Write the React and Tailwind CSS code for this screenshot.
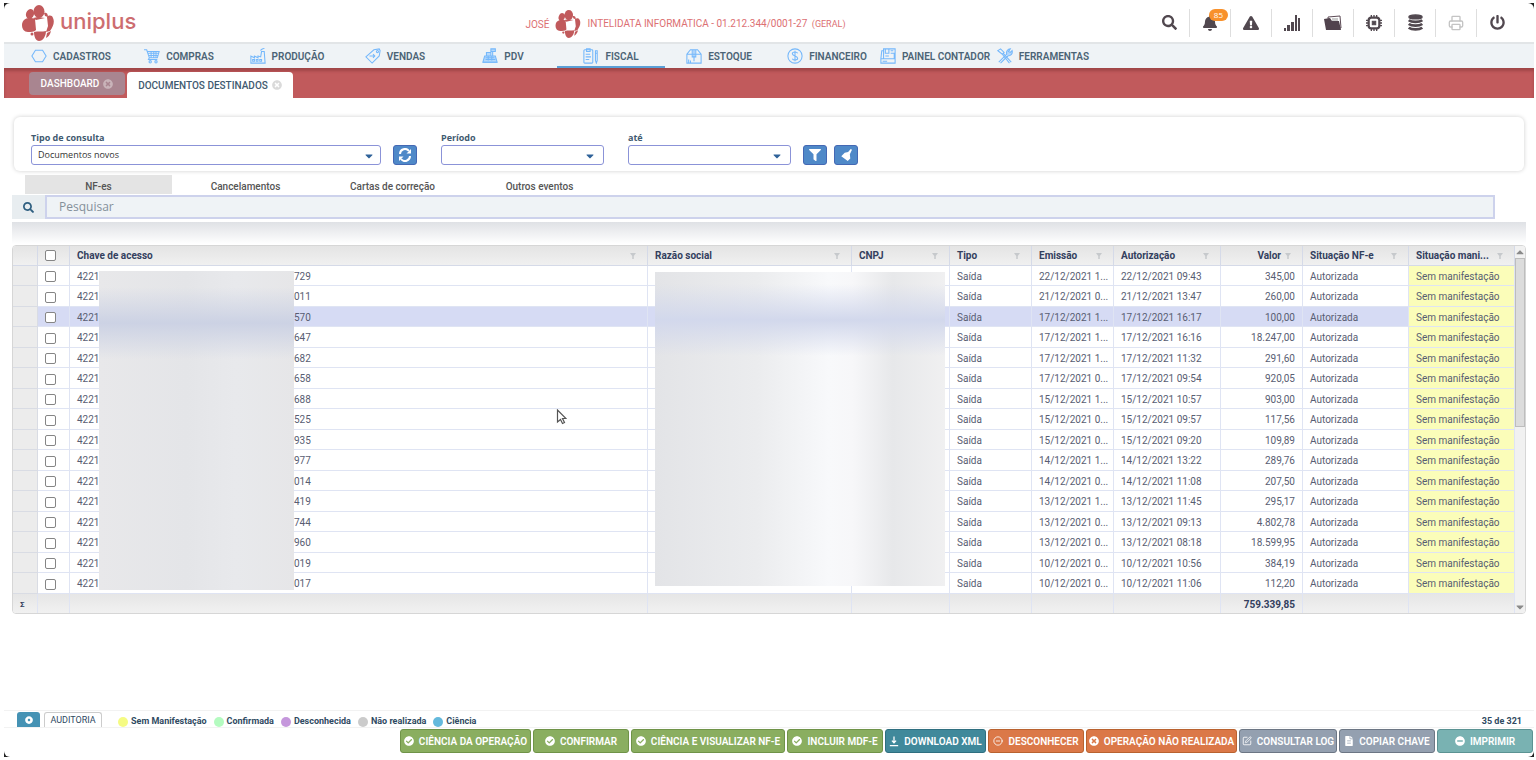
import React, { useState } from 'react';
import {
  FaSearch, FaBell, FaExclamationTriangle, FaFilter, FaPowerOff, FaCaretDown, FaCaretUp,
  FaCheckCircle, FaTimesCircle, FaMinusCircle, FaFileAlt, FaDotCircle,
} from 'react-icons/fa';
import { CircleMinus, SquarePen, Printer } from 'lucide-react';

const narrow = "font-['Liberation_Sans_Narrow','Roboto',sans-serif]";

const Emblem = ({ className }) => (
  <svg viewBox="0 0 32 36" className={className} fill="#c15a5c" aria-hidden="true">
    <ellipse cx="17" cy="6.500" rx="5.500" ry="6.500" />
    <ellipse cx="8" cy="9" rx="4" ry="5" transform="rotate(20 8 9)" />
    <path d="M0 20c0-4 3-7 7-7 3 0 5 0 6 1l1 11c-2 2-5 2-8 2-4 0-6-3-6-7z" />
    <path d="M11 13l5-1 7 1-9 2z" />
    <path d="M25 12c2-2 5-2 6 1 2 4 0 9-3 13l-4 1 2-6z" />
    <path d="M12 27c4-1 8 0 12-1 0 5-3 10-7 10-3 0-5-4-5-9z" />
    <path d="M25 28l4-2c-1 4-3 6-5 7z" />
    <path d="M22 8c2-1 4 0 4 4l-3-1z" />
    <circle cx="10" cy="29" r="1.500" />
  </svg>
);

const SignalIcon = () => (
  <svg viewBox="0 0 18 18" className="w-[18px] h-[18px]" fill="currentColor">
    <path d="M1 14h2v3H1zM4 11h3v6H4zM8 8h3v9H8zM12 1h2v16h-2zM15 4h2v13h-2z" />
  </svg>
);

const FolderIcon = () => (
  <svg viewBox="0 0 18 16" className="w-[18px] h-4">
    <path d="M4 2l12-1 1 12H5z" fill="#fff" stroke="#5c4a55" />
    <path d="M8 4h6M8 6h6" stroke="#999" />
    <path d="M0 4l6-1 2 3h7l2 9H2z" fill="#51434d" />
  </svg>
);

const ChipIcon = () => (
  <svg viewBox="0 0 18 18" className="w-4 h-4" fill="none" stroke="currentColor" strokeWidth="2.500">
    <rect x="3" y="3" width="12" height="12" rx="3" />
    <rect x="7" y="7" width="4" height="4" fill="currentColor" strokeWidth="1" />
    <path d="M6 0v3M9 0v3M12 0v3M6 15v3M9 15v3M12 15v3M0 6h3M0 9h3M0 12h3M15 6h3M15 9h3M15 12h3" strokeWidth="1.500" />
  </svg>
);

const DiscsIcon = () => (
  <svg viewBox="0 0 16 18" className="w-[15px] h-[17px]" fill="none" stroke="currentColor" strokeWidth="2.800">
    <ellipse cx="8" cy="3" rx="7" ry="2" fill="currentColor" strokeWidth="1.500" />
    <path d="M.8 6.500c3 2.500 11.400 2.500 14.400 0M.8 10.500c3 2.500 11.400 2.500 14.400 0M.8 14.500c3 2.500 11.400 2.500 14.400 0" />
  </svg>
);

const BroomIcon = () => (
  <svg viewBox="0 0 14 14" className="w-3 h-3" fill="#fff">
    <path d="M12.500 0L14 1l-2.500 5 .5 5-3 3-7.500-5.500 4-4 4-1z" />
  </svg>
);

const RefreshIcon = () => (
  <svg viewBox="0 0 14 14" className="w-[14px] h-[14px]" fill="none" stroke="#fff" strokeWidth="2">
    <path d="M2 6a5 5 0 0 1 9-3M12 8a5 5 0 0 1-9 3" />
    <path d="M13 1v4.500H8.500zM1 13V8.500h4.500z" fill="#fff" stroke="none" />
  </svg>
);

const DownloadIcon = () => (
  <svg viewBox="0 0 12 12" className="w-[10px] h-[11px] shrink-0" fill="none" stroke="#fff" strokeWidth="1.500">
    <path d="M6 0v7M3.500 5L6 7.500 8.500 5M1 11h10" />
  </svg>
);

const NavIcon = ({ children }) => (
  <svg viewBox="0 0 18 18" className="w-4 h-4 shrink-0" fill="none" stroke="#75b8fb" strokeWidth="1.200">
    {children}
  </svg>
);

const menu = [
  { label: 'CADASTROS', icon: <path d="M5 2.500h8L17 9l-4 6.500H5L1 9z" /> },
  { label: 'COMPRAS', icon: <><path d="M0 2h3l3 9h9l2-7H4M6 11l-1 2h10M5 6h11M5.500 8.500h10M8 4v7M11 4v7M13.500 4v7" /><circle cx="7" cy="15.500" r="1.300" /><circle cx="13.500" cy="15.500" r="1.300" /></> },
  { label: 'PRODUÇÃO', icon: <path d="M1 17V9l4 2V9l4 2V9l3 1 1-6h3l1 13zM12 3c0-2 4-2 4-3M3 13h2v2H3zM7 13h2v2H7zM11 13h2v2h-2z" /> },
  { label: 'VENDAS', icon: <><path d="M1 10l9-8 6-1 1 2-1 6-8 8z" /><circle cx="14" cy="4" r="1.200" /><path d="M5 9h6M9 7l2 2-2 2" /></> },
  { label: 'PDV', icon: <><path d="M3 9h12l2 7H1zM5 9V5h5v4M12 9V4M10 1h5v3h-5z" fill="#b5d8fb" /><path d="M4 11h10M4 13h11M7 9v5M11 9v5M1 16h16" /></> },
  { label: 'FISCAL', icon: <><rect x="1" y="2" width="10" height="15" rx="1" /><path d="M4 1h4v3H4zM3 7h5M3 10h6M3 13h4M14 3h2v11l-1 3-1-3zM14 6h2" /></> },
  { label: 'ESTOQUE', icon: <path d="M1 17V7l4-5h8l4 5v10zM1 7h16M9 2v13M7 2v8h4V2M3 17v-4M5 17v-3" /> },
  { label: 'FINANCEIRO', icon: <><circle cx="9" cy="9" r="8" /><path d="M12 6c-1-2-6-2-6 .5S12 9 12 11.500 7 14 6 12M9 3v12" /></> },
  { label: 'PAINEL CONTADOR', icon: <><path d="M4 12V1h13v11M1 12h16v5H1zM6 1v5h4V1M12 6h4v6M3 15h5M1 12l1-9h2" /><path d="M12 3h3M6 9h4" /></> },
  { label: 'FERRAMENTAS', icon: <><path d="M2 16L11 7M4 17l8-8M11 7c-1-3 1-6 4-6l-2 3 2 1 2-2c1 4-2 6-5 6" fill="#b5d8fb" /><path d="M1 3l3-2 4 4-2 2zM7 6l9 10M6 7l8 10" /></> },
];

const documents = [
  ['729', '22/12/2021 1...', '22/12/2021 09:43', '345,00'],
  ['011', '21/12/2021 0...', '21/12/2021 13:47', '260,00'],
  ['570', '17/12/2021 1...', '17/12/2021 16:17', '100,00'],
  ['647', '17/12/2021 1...', '17/12/2021 16:16', '18.247,00'],
  ['682', '17/12/2021 1...', '17/12/2021 11:32', '291,60'],
  ['658', '17/12/2021 0...', '17/12/2021 09:54', '920,05'],
  ['688', '15/12/2021 1...', '15/12/2021 10:57', '903,00'],
  ['525', '15/12/2021 0...', '15/12/2021 09:57', '117,56'],
  ['935', '15/12/2021 0...', '15/12/2021 09:20', '109,89'],
  ['977', '14/12/2021 1...', '14/12/2021 13:22', '289,76'],
  ['014', '14/12/2021 0...', '14/12/2021 11:08', '207,50'],
  ['419', '13/12/2021 1...', '13/12/2021 11:45', '295,17'],
  ['744', '13/12/2021 0...', '13/12/2021 09:13', '4.802,78'],
  ['960', '13/12/2021 0...', '13/12/2021 08:18', '18.599,95'],
  ['019', '10/12/2021 0...', '10/12/2021 10:56', '384,19'],
  ['017', '10/12/2021 0...', '10/12/2021 11:06', '112,20'],
];

const columns = ['Chave de acesso', 'Razão social', 'CNPJ', 'Tipo', 'Emissão', 'Autorização', 'Valor', 'Situação NF-e', 'Situação mani...'];

const legend = [
  ['Sem Manifestação', 'bg-[#f5fb83]'],
  ['Confirmada', 'bg-[#b4fbc0]'],
  ['Desconhecida', 'bg-[#c597dc]'],
  ['Não realizada', 'bg-[#cbcbcb]'],
  ['Ciência', 'bg-[#64b9dc]'],
];

const green = 'bg-[#8aae60] border-[#6f9348]';
const orange = 'bg-[#db7848] border-[#b9622f]';
const gray = 'bg-[#94a0b0] border-[#6c7684]';
const iconSize = 'w-[10px] h-[10px] shrink-0';

const actions = [
  { label: 'CIÊNCIA DA OPERAÇÃO', icon: <FaCheckCircle className={iconSize} />, style: green, width: 'w-[131px]' },
  { label: 'CONFIRMAR', icon: <FaCheckCircle className={iconSize} />, style: green, width: 'w-24' },
  { label: 'CIÊNCIA E VISUALIZAR NF-E', icon: <FaCheckCircle className={iconSize} />, style: green, width: 'w-[154px]' },
  { label: 'INCLUIR MDF-E', icon: <FaCheckCircle className={iconSize} />, style: green, width: 'w-24' },
  { label: 'DOWNLOAD XML', icon: <DownloadIcon />, style: 'bg-[#40899b] border-[#2f6f80]', width: 'w-[101px]' },
  { label: 'DESCONHECER', icon: <CircleMinus className={iconSize} />, style: orange, width: 'w-24' },
  { label: 'OPERAÇÃO NÃO REALIZADA', icon: <FaTimesCircle className={iconSize} />, style: orange, width: 'w-[151px]' },
  { label: 'CONSULTAR LOG', icon: <SquarePen className={iconSize} />, style: gray, width: 'w-[98px]' },
  { label: 'COPIAR CHAVE', icon: <FaFileAlt className={iconSize} />, style: gray, width: 'w-24' },
  { label: 'IMPRIMIR', icon: <FaMinusCircle className={iconSize} />, style: 'bg-[#79b2b2] border-[#5b9393]', width: 'w-24' },
];

const Header = () => {
  const tools = [
    ['Pesquisar', <FaSearch className="w-[15px] h-[15px]" />],
    ['Notificações', <FaBell className="w-4 h-4" />, '85'],
    ['Alertas', <FaExclamationTriangle className="w-4 h-4" />],
    ['Indicadores', <SignalIcon />],
    ['Arquivos', <FolderIcon />],
    ['Sistema', <ChipIcon />],
    ['Dados', <DiscsIcon />],
    ['Imprimir', <Printer className="w-4 h-4 text-[#c4c4c4]" />],
    ['Sair', <FaPowerOff className="w-[15px] h-[15px]" />],
  ];

  return (
    <header className="flex items-center h-[39px] pl-[18px] pr-4">
      <div className="flex items-center gap-[6px] w-[200px]">
        <Emblem className="w-8 h-9" />
        <span className="text-[22px] leading-6 pb-1 font-medium text-[#cd6d70] font-['Inter',sans-serif]">uniplus</span>
      </div>
      <div className={`flex-1 flex items-center justify-center gap-[6px] pt-[3px] text-[10px] text-[#dc7073] whitespace-nowrap ${narrow}`}>
        <span>JOSÉ</span>
        <Emblem className="w-[26px] h-7" />
        <span>INTELIDATA INFORMATICA - 01.212.344/0001-27 <span className="pl-[2px] text-[9px]">(GERAL)</span></span>
      </div>
      <div className="flex items-center">
        {tools.map(([label, icon, badge]) => (
          <button key={label} aria-label={label} className="relative w-[41px] h-7 flex items-center justify-center text-[#51484f] border-r border-[#dedede] last:border-r-0">
            {icon}
            {badge && (
              <span className="absolute top-0 right-[2px] px-[5px] rounded-full bg-[#f8912c] text-white text-[8px] leading-3 font-['Open_Sans',sans-serif]">{badge}</span>
            )}
          </button>
        ))}
      </div>
    </header>
  );
};

const Nav = () => (
  <nav className="flex h-[26px] pl-[13px] bg-[#eff3f6] border-t-2 border-[#e2e5e7]">
    {menu.map(({ label, icon }) => (
      <a
        key={label}
        href="#"
        className={`w-[108px] flex items-center justify-center gap-[6px] pt-[2px] border-b-2 text-[10px] font-semibold text-[#4b6375] whitespace-nowrap ${narrow} ${
          label === 'FISCAL' ? 'border-[#5a9fd6]' : 'border-transparent'
        }`}
      >
        <NavIcon>{icon}</NavIcon>
        {label}
      </a>
    ))}
  </nav>
);

const labelStyle = 'block text-[9px] leading-[14px] font-bold text-[#3f5a70]';

const DateSelect = ({ id, label }) => (
  <div className="w-[163px]">
    <label htmlFor={id} className={labelStyle}>{label}</label>
    <div className="relative">
      <select id={id} className="block w-full h-5 appearance-none rounded-[3px] border border-[#8b93d8] bg-white">
        <option></option>
      </select>
      <FaCaretDown className="absolute right-2 top-[5px] w-3 h-3 text-[#2f6299] pointer-events-none" />
    </div>
  </div>
);

const iconButton = 'w-6 h-5 flex items-center justify-center rounded-[3px] bg-[#4f89c8] border border-[#4468b4] text-white';

const Filters = () => (
  <section className="mx-[10px] mt-[19px] h-[54px] flex items-end gap-3 pl-[17px] pb-[6px] rounded-md shadow-[0_0_4px_#cfcfcf]">
    <div className="w-[350px]">
      <label htmlFor="tipo" className={labelStyle}>Tipo de consulta</label>
      <div className="relative">
        <select id="tipo" className="block w-full h-5 pl-[6px] appearance-none rounded-[3px] border border-[#8b93d8] bg-white text-[9px] text-[#333]">
          <option>Documentos novos</option>
        </select>
        <FaCaretDown className="absolute right-[6px] top-[5px] w-3 h-3 text-[#2f6299] pointer-events-none" />
      </div>
    </div>
    <button aria-label="Atualizar" className={iconButton}><RefreshIcon /></button>
    <div className="flex gap-6 pl-3">
      <DateSelect id="periodo" label="Período" />
      <DateSelect id="ate" label="até" />
    </div>
    <div className="flex gap-[7px]">
      <button aria-label="Filtrar" className={iconButton}><FaFilter className="w-3 h-3" /></button>
      <button aria-label="Limpar" className={iconButton}><BroomIcon /></button>
    </div>
  </section>
);

const cell = 'border-r border-b border-[#dfe4f3] px-[7px] pt-[2px] whitespace-nowrap overflow-hidden';
const headCell = 'border-r border-b border-[#d5dae8] px-[7px]';
const gutter = 'bg-[#ececec] border-r border-b border-[#d9dce4]';
const checkbox = 'block w-[11px] h-[11px] appearance-none rounded-[2px] border border-[#858585] bg-white';

const DocumentsTable = () => (
  <div className="relative mx-2 flex rounded border border-[#d6d6d6] overflow-hidden">
    <table className="flex-1 w-full table-fixed border-separate border-spacing-0 text-[10px] leading-[14px] text-[#585d72] font-['Roboto',sans-serif]">
      <colgroup>
        <col className="w-[25px]" />
        <col className="w-8" />
        <col />
        <col className="w-[204px]" />
        <col className="w-[98px]" />
        <col className="w-[82px]" />
        <col className="w-[82px]" />
        <col className="w-[107px]" />
        <col className="w-[82px]" />
        <col className="w-[106px]" />
        <col className="w-[106px]" />
      </colgroup>
      <thead>
        <tr className={`h-5 bg-linear-to-b from-[#e4e4e4] to-[#f1f1f1] text-[10px] text-[#33405e] ${narrow}`}>
          <th className={headCell}></th>
          <th className={headCell}>
            <input type="checkbox" aria-label="Selecionar todos" className={checkbox} />
          </th>
          {columns.map((name) => (
            <th key={name} className={`${headCell} font-bold`}>
              <div className={`flex items-center gap-1 whitespace-nowrap ${name === 'Valor' ? 'justify-end' : 'justify-between'}`}>
                {name}
                <svg viewBox="0 0 8 8" className="w-[6px] h-2 shrink-0 mr-1" fill="#c6c9cc"><path d="M0 0h8L5 4v4H3V4z" /></svg>
              </div>
            </th>
          ))}
        </tr>
      </thead>
      <tbody>
        {documents.map(([key, issued, authorized, value]) => (
          <tr key={key} className={`h-5 even:h-[21px] ${key === '570' ? 'bg-[#d6dbf4]' : 'bg-white'}`}>
            <td className={gutter}></td>
            <td className={cell}>
              <input type="checkbox" aria-label={`Selecionar ${key}`} className={checkbox} />
            </td>
            <td className={cell}>
              <span className="inline-block w-[217px]">4221</span>{key}
            </td>
            <td className={cell}></td>
            <td className={cell}></td>
            <td className={cell}>Saída</td>
            <td className={cell}>{issued}</td>
            <td className={cell}>{authorized}</td>
            <td className={`${cell} text-right`}>{value}</td>
            <td className={cell}>Autorizada</td>
            <td className={`${cell} bg-[#fbfdb9]`}>Sem manifestação</td>
          </tr>
        ))}
      </tbody>
      <tfoot>
        <tr className="h-[19px] bg-linear-to-b from-[#e6e6e6] to-[#f1f1f1] font-bold text-[#33405e]">
          <td className="border-r border-[#dfe4f3] px-[7px] pt-[2px] text-[8px]">Σ</td>
          <td className="border-r border-[#dfe4f3]"></td>
          {columns.map((name) => (
            <td key={name} className="border-r border-[#dfe4f3] px-[7px] pt-[2px] text-right">{name === 'Valor' && '759.339,85'}</td>
          ))}
        </tr>
      </tfoot>
    </table>
    <div className="w-[10px] shrink-0 flex flex-col items-center bg-[#f1f1f1]">
      <FaCaretUp className="w-2 h-3 text-[#8a8a8a]" />
      <div className="w-full h-[169px] bg-[#dcdcdc] border border-[#bdbdbd]" />
      <div className="flex-1" />
      <FaCaretDown className="w-2 h-3 text-[#8a8a8a]" />
    </div>
    {/* hidden customer data */}
    <div className="absolute left-[86px] top-[25px] w-[195px] h-[319px] bg-[linear-gradient(to_right,#e8e8ea,#e4e5e8_45%,#e8e9ec_70%,#e6e6e8)]">
      <div className="mt-4 h-[72px] bg-linear-to-b from-transparent via-[#ccd2e4] to-transparent" />
    </div>
    <div className="absolute right-[580px] top-[26px] w-[290px] h-[314px] bg-[linear-gradient(to_right,#e3e4e7,#ebecee_35%,#f8f9fb_60%,#f7f7f9_68%,#e7e8ea_82%,#f0f0f1)]">
      <div className="mt-3 h-[72px] bg-linear-to-b from-transparent via-[#d2d8ec] to-transparent" />
    </div>
    <svg viewBox="0 0 10 16" className="absolute left-[543px] top-[163px] w-[11px] h-4" fill="#fff" stroke="#555" strokeWidth="1.200">
      <path d="M1 1v12l3-2.500 2 4 2-1-2-4h3.500z" />
    </svg>
  </div>
);

const App = () => {
  const [activeTab, setActiveTab] = useState('NF-es');

  return (
    <div className="min-h-screen flex flex-col pt-[3px] pb-[3px] pl-1 pr-[2px] bg-white font-['Open_Sans',sans-serif]">
      <div className="flex-1 flex flex-col bg-[#222]">
        <div className="flex-1 flex flex-col rounded-md bg-white">
          <Header />
          <Nav />
          <div className={`flex items-start h-[30px] pt-1 pl-[25px] gap-[2px] bg-[#c15a5c] shadow-[inset_0_3px_3px_#a04648] text-[10px] font-medium whitespace-nowrap ${narrow}`}>
            <button className="w-24 h-[23px] flex items-center justify-center gap-1 rounded bg-[#a98590] text-white">
              DASHBOARD <FaTimesCircle className="w-[10px] h-[10px] text-[#c9b3b9]" />
            </button>
            <button className="w-[166px] h-[26px] flex items-center justify-center gap-1 rounded-t bg-white text-[#3f5a70]">
              DOCUMENTOS DESTINADOS <FaTimesCircle className="w-[10px] h-[10px] text-[#dadada]" />
            </button>
          </div>

          <Filters />

          <div className={`flex mt-1 pl-[21px] text-[10px] font-medium text-[#555] ${narrow}`}>
            {['NF-es', 'Cancelamentos', 'Cartas de correção', 'Outros eventos'].map((tab) => (
              <button
                key={tab}
                onClick={() => setActiveTab(tab)}
                className={`w-[147px] h-[19px] pt-1 ${activeTab === tab ? 'bg-[#e4e4e4]' : ''}`}
              >
                {tab}
              </button>
            ))}
          </div>
          <div className="flex h-6 ml-2 mr-[39px] mt-px">
            <label htmlFor="search" className="w-[33px] flex items-center justify-center bg-[#e8edf0]">
              <FaSearch className="w-[11px] h-[11px] text-[#2f5f80]" />
            </label>
            <input id="search" type="search" placeholder="Pesquisar" className="flex-1 pl-3 border-2 border-[#cdd2ec] bg-[#eff3f6] text-[12px] placeholder:text-[#84909a]" />
          </div>
          <div className="mx-2 mt-[3px] mb-px h-[22px] bg-linear-to-b from-[#dfe1e5] to-white" />

          <DocumentsTable />

          <div className="flex-1" />
          <footer>
            <div className={`flex items-end h-[18px] pl-[13px] pr-3 border-y border-[#f2f2f2] text-[9px] leading-[11px] text-[#2f4a62] ${narrow}`}>
              <button aria-label="Configurações" className="w-[23px] h-[15px] flex items-center justify-center rounded-t-[3px] bg-[#4592b4] text-white">
                <FaDotCircle className="w-2 h-2" />
              </button>
              <button className="w-[58px] h-[15px] ml-1 rounded-t-[3px] border border-b-0 border-[#ccc]">AUDITORIA</button>
              <ul className="flex items-center gap-[7px] pl-4 font-bold">
                {legend.map(([label, color]) => (
                  <li key={label} className="flex items-center gap-[3px]">
                    <span className={`w-[10px] h-[10px] rounded-full ${color}`} />
                    {label}
                  </li>
                ))}
              </ul>
              <span className="ml-auto font-bold">35 de 321</span>
            </div>
            <div className="flex justify-end gap-[2px] pt-px pb-1 pr-px">
              {actions.map(({ label, icon, style, width }) => (
                <button key={label} className={`h-6 flex items-center justify-center gap-[5px] rounded-[3px] border text-white text-[10px] font-semibold whitespace-nowrap ${narrow} ${style} ${width}`}>
                  {icon}
                  {label}
                </button>
              ))}
            </div>
          </footer>
        </div>
      </div>
    </div>
  );
};

export default App;
